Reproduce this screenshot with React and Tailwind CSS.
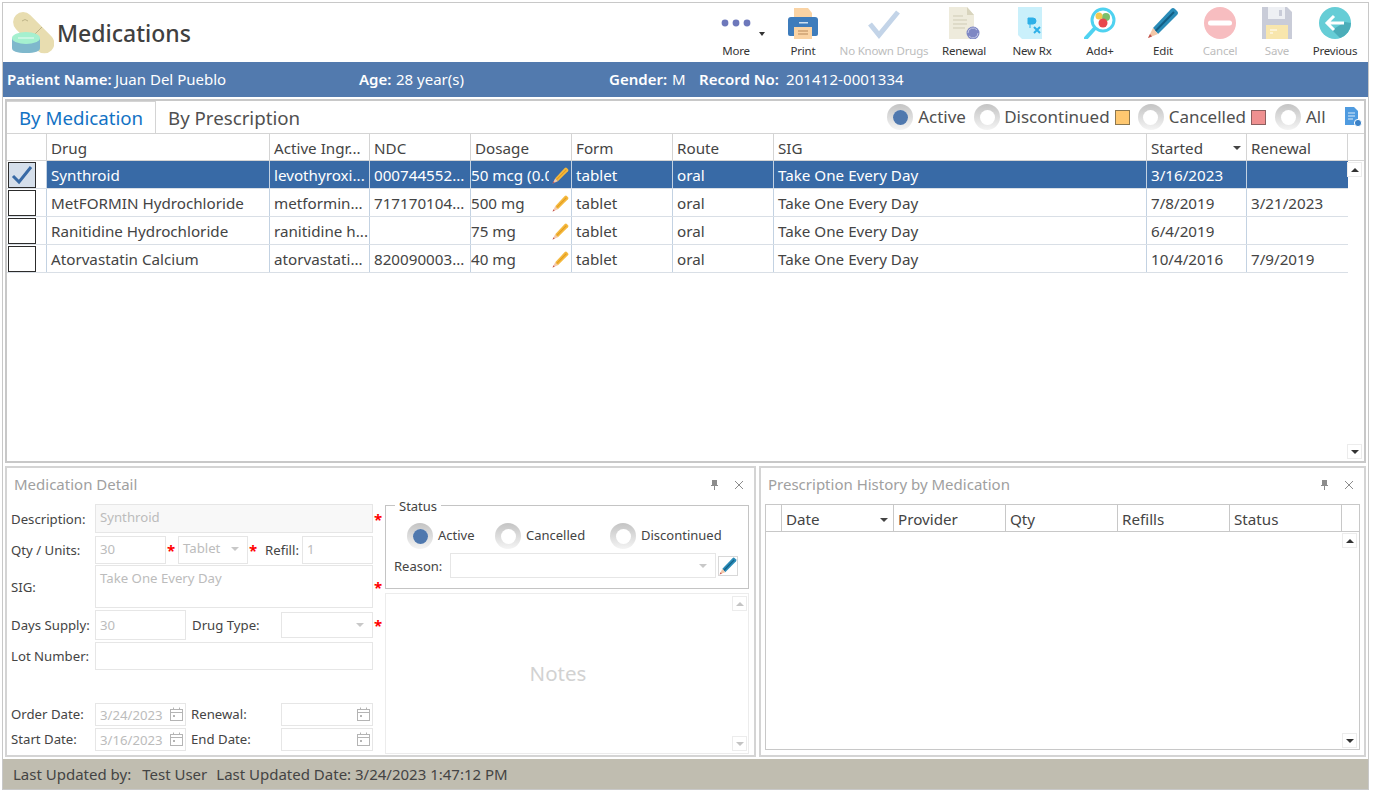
// columns of the medication grid, widths include the 1px right border
const COLS = [
  ['Drug', 223], ['Active Ingr...', 100], ['NDC', 101], ['Dosage', 101], ['Form', 101],
  ['Route', 101], ['SIG', 373], ['Started', 100], ['Renewal', 101],
]
const ROWS = [
  ['Synthroid', 'levothyroxi...', '000744552...', '50 mcg (0.0', 'tablet', 'oral', 'Take One Every Day', '3/16/2023', ''],
  ['MetFORMIN Hydrochloride', 'metformin...', '717170104...', '500 mg', 'tablet', 'oral', 'Take One Every Day', '7/8/2019', '3/21/2023'],
  ['Ranitidine Hydrochloride', 'ranitidine h...', '', '75 mg', 'tablet', 'oral', 'Take One Every Day', '6/4/2019', ''],
  ['Atorvastatin Calcium', 'atorvastati...', '820090003...', '40 mg', 'tablet', 'oral', 'Take One Every Day', '10/4/2016', '7/9/2019'],
]

function Pill() {
  return (
    <svg width="42" height="42" viewBox="0 0 42 42">
      <rect x="-3" y="10" width="50" height="20" rx="10" transform="rotate(45 21 20)" fill="#e8ddb0" />
      <path d="M21 24 L30 15" stroke="#bdb387" strokeWidth="1" />
      <path d="M10 9 q3 -3 6 0" stroke="#bdb387" fill="none" />
      <path d="M0 26 v10 q0 5 14 5 q14 0 14 -5 v-10z" fill="#7fb8cc" />
      <ellipse cx="14" cy="26" rx="14" ry="6" fill="#a5f0cf" />
      <path d="M6 26 h16" stroke="#d5f8e8" strokeWidth="1.5" />
    </svg>
  )
}

const Icons = {
  more: (
    <svg width="32" height="32" viewBox="0 0 32 32" fill="#6d78bb">
      <circle cx="5" cy="16" r="3.4" /><circle cx="16" cy="16" r="3.4" /><circle cx="27" cy="16" r="3.4" />
    </svg>
  ),
  print: (
    <svg width="32" height="32" viewBox="0 0 32 32">
      <path d="M7 1 h14 l4 5 v9 h-18z" fill="#fad3a4" />
      <path d="M1 13 q0 -3 3 -3 h24 q3 0 3 3 v14 q0 2 -2 2 h-26 q-2 0 -2 -2z" fill="#3e7cbc" />
      <rect x="12" y="15" width="9" height="1.5" fill="#cfe0f0" />
      <rect x="7" y="20" width="18" height="12" fill="#fad3a4" />
      <path d="M11 24 h10 M11 27 h10" stroke="#b8895a" strokeWidth="1" />
    </svg>
  ),
  check: (
    <svg width="32" height="32" viewBox="0 0 32 32">
      <path d="M2 17 L11 28 L30 5" fill="none" stroke="#c3d4e8" strokeWidth="5" />
    </svg>
  ),
  renewal: (
    <svg width="32" height="32" viewBox="0 0 32 32">
      <path d="M1 0 h18 l7 8 v24 h-25z" fill="#eeebdc" />
      <path d="M19 0 l7 8 h-7z" fill="#d8d4bd" />
      <path d="M5 9 h10 M5 13 h14 M5 17 h14 M5 21 h12" stroke="#cfcbb5" strokeWidth="1" />
      <circle cx="25" cy="26" r="6.5" fill="#7e87c4" />
      <path d="M20 26 a5 5 0 0 1 9 -3 M30 26 a5 5 0 0 1 -9 3" stroke="#c3c8e6" fill="none" />
    </svg>
  ),
  rx: (
    <svg width="32" height="32" viewBox="0 0 32 32">
      <path d="M2 0 h24 v32 h-20 l-4 -4z" fill="#caf0fb" />
      <path d="M12 11 h5 q3 0 3 3 t-3 3 h-5z M14 13 v8" fill="#2eb0e8" stroke="#2eb0e8" />
      <path d="M18 20 l6 6 M24 20 l-6 6" stroke="#2eb0e8" strokeWidth="2" />
    </svg>
  ),
  add: (
    <svg width="32" height="32" viewBox="0 0 32 32">
      <path d="M2 31 L11 21" stroke="#4fd2f0" strokeWidth="4" strokeLinecap="round" />
      <circle cx="19" cy="13" r="11" fill="#fff" stroke="#4fd2f0" strokeWidth="3" />
      <circle cx="22" cy="10" r="4" fill="#7bbf6a" />
      <circle cx="15" cy="9" r="3.5" fill="#f3c94e" />
      <circle cx="19" cy="16" r="4.5" fill="#e8484c" />
    </svg>
  ),
  edit: <Pencil size={32} body="#2a8cb8" tip="#135f85" />,
  cancel: (
    <svg width="32" height="32" viewBox="0 0 32 32">
      <circle cx="16" cy="16" r="16" fill="#f7bdc0" />
      <rect x="4" y="13.5" width="24" height="5" rx="2.5" fill="#fff" />
    </svg>
  ),
  save: (
    <svg width="32" height="32" viewBox="0 0 32 32">
      <path d="M1 0 h25 l5 5 v27 h-30z" fill="#c9ccd8" />
      <rect x="7" y="0" width="17" height="12" fill="#eef0f4" />
      <rect x="18" y="3" width="3" height="6" fill="#c9ccd8" />
      <rect x="5" y="18" width="22" height="14" fill="#f8e6ad" />
      <path d="M9 23 h7 M9 26 h3" stroke="#fff" strokeWidth="1.2" />
    </svg>
  ),
  previous: (
    <svg width="32" height="32" viewBox="0 0 32 32">
      <circle cx="16" cy="16" r="16" fill="#66cdd6" />
      <path d="M13 23 l8 8 a16 16 0 0 0 11 -15 l-6 -1z" fill="#4badb9" />
      <path d="M25 16 H9 M15 9 l-7 7 l7 7" fill="none" stroke="#fff" strokeWidth="3" />
    </svg>
  ),
}

function Pencil({ size = 32, body = '#f5b93e', tip = '#e09a1e' }) {
  return (
    <svg width={size} height={size} viewBox="0 0 32 32">
      <path d="M6 21 L24 2 q2 -2 4 0 l2 2 q2 2 0 4 L11 27z" fill={body} />
      <path d="M8.5 24 L27 5" stroke={tip} strokeWidth="2" />
      <path d="M6 21 L11 27 L1 31z" fill="#f3c7a8" />
      <path d="M3 27 L1 31 L5 29.5z" fill="#c0504d" />
    </svg>
  )
}

function ToolButton({ icon, label, width, disabled }) {
  return (
    <div className="flex h-full shrink-0 flex-col items-center pt-[4px]" style={{ width }}>
      <div className="h-[32px]">{icon}</div>
      <div className={`mt-[5px] whitespace-nowrap text-[11.5px] leading-[14px] tracking-[-0.2px] ${disabled ? 'text-[#bdbdbd]' : 'text-[#333]'}`}>{label}</div>
    </div>
  )
}

function Radio({ on, size = 26 }) {
  const inner = Math.round(size * 0.58)
  return (
    <span className="flex shrink-0 items-center justify-center rounded-full bg-gradient-to-b from-[#c4c4c4] to-[#f4f4f4]" style={{ width: size, height: size }}>
      <span className="flex items-center justify-center rounded-full bg-white" style={{ width: inner, height: inner }}>
        {on && <span className="block h-full w-full rounded-full bg-[#4f78ae]" />}
      </span>
    </span>
  )
}

function ScrollBtn({ down, faint, className = '' }) {
  return (
    <span className={`flex h-[15px] w-[15px] items-center justify-center border border-[#ececec] bg-white ${className}`}>
      <span className={`h-0 w-0 border-x-[4px] border-x-transparent ${down ? 'border-t-[4px]' : 'border-b-[4px]'} ${faint ? 'border-t-[#c4c4c4] border-b-[#c4c4c4]' : 'border-t-[#333] border-b-[#333]'}`} />
    </span>
  )
}

function SortArrow() {
  return <span className="ml-auto mr-[5px] h-0 w-0 border-x-[4px] border-t-[4px] border-x-transparent border-t-[#444]" />
}

function MedGrid() {
  return (
    <div className="flex min-h-0 flex-1 flex-col text-[15.2px] text-[#444]">
      <div className="flex h-[28px] shrink-0 border-y border-[#d4d4d4]">
        <div className="w-[40px] border-r border-[#d4d4d4]" />
        {COLS.map(([name, w]) => (
          <div key={name} className="flex items-center border-r border-[#d4d4d4] pl-[4px] pt-[2px]" style={{ width: w }}>
            <span className="whitespace-nowrap">{name}</span>
            {name === 'Started' && <SortArrow />}
          </div>
        ))}
      </div>
      <div className="relative flex-1">
        {ROWS.map((row, i) => (
          <div key={row[0]} className={`flex h-[28px] w-[1341px] border-b border-[#d9dfe6] ${i === 0 ? 'bg-[#386aa6] text-white' : ''}`}>
            <div className="flex w-[40px] shrink-0 items-center border-r border-[#c3d2e2] bg-white pl-[1px]">
              <div className={`flex h-[26px] w-[28px] items-center justify-center border border-[#2c2c2c] ${i === 0 ? 'bg-[#d5dfeb]' : 'bg-white'}`}>
                {i === 0 && (
                  <svg width="22" height="20" viewBox="0 0 22 20">
                    <path d="M2 11 L8 17 L20 2" fill="none" stroke="#386aa6" strokeWidth="3" />
                  </svg>
                )}
              </div>
            </div>
            {row.map((cell, c) => (
              <div key={c} className={`relative flex items-center overflow-hidden whitespace-nowrap pt-[2px] ${c === 8 ? '' : 'border-r border-[#c3d2e2]'} ${c === 3 ? 'pl-[0px]' : 'pl-[4px]'}`} style={{ width: COLS[c][1] }}>
                {cell}
                {c === 3 && (
                  <span className={`absolute right-[2px] top-[5px] flex h-[18px] w-[20px] items-center justify-end ${i === 0 ? 'bg-[#386aa6]' : ''}`}>
                    <Pencil size={17} />
                  </span>
                )}
              </div>
            ))}
          </div>
        ))}
        <ScrollBtn className="absolute right-[2px] top-[1px]" />
        <ScrollBtn down className="absolute bottom-[2px] right-[2px]" />
      </div>
    </div>
  )
}

function FieldBox({ value, className = '', filled, children }) {
  return (
    <div className={`relative shrink-0 border border-[#e6e6e6] pl-[4px] text-[13.2px] leading-[22px] text-[#bcbcbc] ${filled ? 'bg-[#f8f8f8]' : 'bg-white'} ${className}`}>
      {value}
      {children}
    </div>
  )
}

function Req() {
  return <span className="w-[10px] shrink-0 pl-[1px] text-[15px] font-bold leading-[14px] text-[#f00]">*</span>
}

function Caret() {
  return <span className="absolute right-[8px] top-[10px] h-0 w-0 border-x-[4px] border-t-[4px] border-x-transparent border-t-[#c8c8c8]" />
}

function DateIcon() {
  return (
    <svg className="absolute right-[2px] top-[3px]" width="13" height="14" viewBox="0 0 13 14" fill="none" stroke="#b4b4b4">
      <rect x="0.5" y="2.5" width="12" height="11" />
      <path d="M0.5 5.5 H12.5 M3.5 0.5 V2.5 M9.5 0.5 V2.5" />
      <rect x="3" y="8" width="2" height="2" fill="#b4b4b4" stroke="none" />
    </svg>
  )
}

function Label({ children, className = 'w-[84px]' }) {
  return <span className={`shrink-0 whitespace-nowrap pt-[2px] text-[13.2px] text-[#444] ${className}`}>{children}</span>
}

function PanelTitle({ title }) {
  return (
    <div className="flex h-[36px] shrink-0 items-center pb-[3px] pl-[7px] pr-[10px]">
      <span className="text-[15px] text-[#a0a0a0]">{title}</span>
      <svg className="ml-auto" width="9" height="10" viewBox="0 0 9 10" fill="#8c8c8c">
        <path d="M2 0 h5 v5 h1 v1 h-3 v4 h-1 v-4 h-3 v-1 h1z" />
      </svg>
      <svg className="ml-[15px]" width="10" height="10" viewBox="0 0 10 10" stroke="#8c8c8c" fill="none">
        <path d="M1 1 L9 9 M9 1 L1 9" />
      </svg>
    </div>
  )
}

function DetailForm() {
  return (
    <div className="flex w-[371px] shrink-0 flex-col pl-[4px]">
      <div className="flex h-[29px] items-center">
        <Label>Description:</Label>
        <FieldBox value="Synthroid" filled className="h-[29px] w-[278px] pt-[1px]" />
        <Req />
      </div>
      <div className="mt-[2px] flex h-[29px] items-center">
        <Label>Qty / Units:</Label>
        <FieldBox value="30" className="h-[28px] w-[71px] pt-[1px]" />
        <Req />
        <span className="w-[2px]" />
        <FieldBox value="Tablet" className="h-[28px] w-[70px]"><Caret /></FieldBox>
        <Req />
        <span className="w-[7px]" />
        <Label className="w-[37px]">Refill:</Label>
        <FieldBox value="1" className="h-[28px] w-[71px] pt-[1px]" />
      </div>
      <div className="mt-[1px] flex h-[43px] items-center">
        <Label>SIG:</Label>
        <FieldBox value="Take One Every Day" className="h-[43px] w-[278px] pt-[1px]" />
        <Req />
      </div>
      <div className="mt-[2px] flex h-[30px] items-center">
        <Label>Days Supply:</Label>
        <FieldBox value="30" className="h-[30px] w-[91px] pt-[3px]" />
        <Label className="w-[95px] pl-[6px]">Drug Type:</Label>
        <FieldBox className="h-[26px] w-[92px]"><Caret /></FieldBox>
        <Req />
      </div>
      <div className="mt-[2px] flex h-[28px] items-center">
        <Label>Lot Number:</Label>
        <FieldBox className="h-[28px] w-[278px]" />
      </div>
      <div className="mt-[32px] flex h-[24px] items-center">
        <Label>Order Date:</Label>
        <FieldBox value="3/24/2023" className="h-[23px] w-[91px]"><DateIcon /></FieldBox>
        <Label className="w-[95px] pl-[5px]">Renewal:</Label>
        <FieldBox className="h-[23px] w-[92px]"><DateIcon /></FieldBox>
      </div>
      <div className="mt-[1px] flex h-[24px] items-center">
        <Label>Start Date:</Label>
        <FieldBox value="3/16/2023" className="h-[23px] w-[91px]"><DateIcon /></FieldBox>
        <Label className="w-[95px] pl-[5px]">End Date:</Label>
        <FieldBox className="h-[23px] w-[92px]"><DateIcon /></FieldBox>
      </div>
    </div>
  )
}

function StatusBox() {
  return (
    <div className="ml-[7px] mt-[1px] flex w-[364px] shrink-0 flex-col">
      <div className="relative h-[84px] border border-[#c4c4c4]">
        <span className="absolute -top-[9px] left-[9px] bg-white px-[4px] text-[13px] leading-[18px] text-[#444]">Status</span>
        <div className="flex h-[47px] items-center pl-[21px] pt-[13px] text-[13px] text-[#444]">
          <Radio on />
          <span className="ml-[5px] w-[57px]">Active</span>
          <Radio />
          <span className="ml-[5px] w-[84px]">Cancelled</span>
          <Radio />
          <span className="ml-[5px]">Discontinued</span>
        </div>
        <div className="flex items-center pl-[8px] text-[13px] text-[#444]">
          <span className="w-[56px] pt-[2px]">Reason:</span>
          <FieldBox className="h-[25px] w-[266px]"><Caret /></FieldBox>
          <span className="ml-[2px] flex h-[20px] w-[20px] items-center justify-center border border-[#d8d8d8]">
            <Pencil size={18} body="#2a8cb8" tip="#135f85" />
          </span>
        </div>
      </div>
      <div className="relative mt-[4px] flex h-[161px] items-center justify-center border border-[#ececec] pr-[18px] text-[20.5px] text-[#d2d2d2]">
        Notes
        <ScrollBtn faint className="absolute right-[1px] top-[2px]" />
        <ScrollBtn faint down className="absolute bottom-[2px] right-[1px]" />
      </div>
    </div>
  )
}

function HistoryGrid() {
  return (
    <div className="mx-[4px] flex h-[246px] w-[595px] flex-col border border-[#c8c8c8] text-[15.2px] text-[#444]">
      <div className="flex h-[27px] shrink-0 border-b border-[#c8c8c8]">
        <div className="w-[16px] border-r border-[#c8c8c8]" />
        {['Date', 'Provider', 'Qty', 'Refills', 'Status'].map((name) => (
          <div key={name} className="flex w-[112px] items-center border-r border-[#c8c8c8] pl-[4px] pt-[3px]">
            {name}
            {name === 'Date' && <SortArrow />}
          </div>
        ))}
      </div>
      <div className="flex flex-1 flex-col items-end justify-between py-[1px] pr-[2px]">
        <ScrollBtn />
        <ScrollBtn down />
      </div>
    </div>
  )
}

export default function App() {
  return (
    <div className="h-[792px] w-[1374px] overflow-hidden bg-white pl-[2px] pt-[2px] font-['Noto_Sans',sans-serif]">
      <div className="flex h-[788px] w-[1367px] flex-col border border-[#c8c8c8]">
        <header className="flex h-[59px] shrink-0 items-center">
          <div className="ml-[9px] mt-[1px]"><Pill /></div>
          <h1 className="ml-[3px] pt-[2px] text-[23px] font-medium text-[#404040]">Medications</h1>
          <div className="ml-auto flex h-full">
            <div className="relative">
              <ToolButton icon={Icons.more} label="More" width={56} />
              <span className="absolute left-[51px] top-[29px] h-0 w-0 border-x-[3.5px] border-t-[4px] border-x-transparent border-t-[#333]" />
            </div>
            <ToolButton icon={Icons.print} label="Print" width={78} />
            <ToolButton icon={Icons.check} label="No Known Drugs" width={84} disabled />
            <ToolButton icon={Icons.renewal} label="Renewal" width={76} />
            <ToolButton icon={Icons.rx} label="New Rx" width={60} />
            <ToolButton icon={Icons.add} label="Add+" width={76} />
            <ToolButton icon={Icons.edit} label="Edit" width={50} />
            <ToolButton icon={Icons.cancel} label="Cancel" width={64} disabled />
            <ToolButton icon={Icons.save} label="Save" width={50} disabled />
            <ToolButton icon={Icons.previous} label="Previous" width={66} />
          </div>
        </header>

        <div className="flex h-[35px] shrink-0 items-center bg-[#527aae] text-[15px] text-white">
          <b className="ml-[4px] w-[104px] whitespace-nowrap font-semibold">Patient Name:</b>
          <span className="ml-[4px] w-[244px]">Juan Del Pueblo</span>
          <b className="w-[33px] font-semibold">Age:</b>
          <span className="ml-[4px] w-[213px]">28 year(s)</span>
          <b className="w-[59px] font-semibold">Gender:</b>
          <span className="ml-[4px] w-[27px]">M</span>
          <b className="w-[81px] whitespace-nowrap font-semibold">Record No:</b>
          <span className="ml-[6px] tracking-[0.1px]">201412-0001334</span>
        </div>

        <main className="ml-[2px] mt-[2px] flex h-[364px] w-[1361px] shrink-0 flex-col border-2 border-[#c8c8c8]">
          <div className="flex h-[32px] shrink-0 items-end text-[18.7px]">
            <div className="flex h-[32px] w-[149px] items-center justify-center border-r border-t border-[#d4d4d4] pt-[1px] text-[#1272c4]">By Medication</div>
            <div className="flex h-[32px] items-center pl-[12px] pt-[2px] text-[#505050]">By Prescription</div>
            <div className="ml-auto flex h-[32px] items-center pr-[2px] text-[17px] text-[#505050]">
              <Radio on />
              <span className="ml-[5px] w-[56px]">Active</span>
              <Radio />
              <span className="ml-[4px]">Discontinued</span>
              <span className="ml-[5px] h-[15px] w-[15px] border border-[#8c7850] bg-[#ffc870]" />
              <span className="w-[8px]" />
              <Radio />
              <span className="ml-[5px]">Cancelled</span>
              <span className="ml-[5px] h-[15px] w-[15px] border border-[#8c6060] bg-[#ef9090]" />
              <span className="w-[9px]" />
              <Radio />
              <span className="ml-[5px] w-[38px]">All</span>
              <svg width="18" height="20" viewBox="0 0 18 20">
                <path d="M1 0 h9 l4 4 v14 h-13z" fill="#4f9be0" />
                <path d="M4 6 h7 M4 9 h7 M4 12 h5" stroke="#dcecfa" />
                <circle cx="14" cy="16" r="3.6" fill="#3a82c8" stroke="#fff" />
              </svg>
            </div>
          </div>
          <MedGrid />
        </main>

        <div className="ml-[2px] mt-[3px] flex h-[291px] w-[1361px] shrink-0 gap-[3px]">
          <section className="flex w-[751px] flex-col border-2 border-[#d4d4d4]">
            <PanelTitle title="Medication Detail" />
            <div className="flex">
              <DetailForm />
              <StatusBox />
            </div>
          </section>
          <section className="flex w-[607px] flex-col border-2 border-[#d4d4d4]">
            <PanelTitle title="Prescription History by Medication" />
            <HistoryGrid />
          </section>
        </div>

        <footer className="mt-[2px] flex flex-1 items-center bg-[#c0bdb0] pl-[10px] text-[15px] text-[#444]">
          <span>Last Updated by:</span>
          <span className="ml-[11px]">Test User</span>
          <span className="ml-[9px]">Last Updated Date: 3/24/2023 1:47:12 PM</span>
        </footer>
      </div>
    </div>
  )
}
